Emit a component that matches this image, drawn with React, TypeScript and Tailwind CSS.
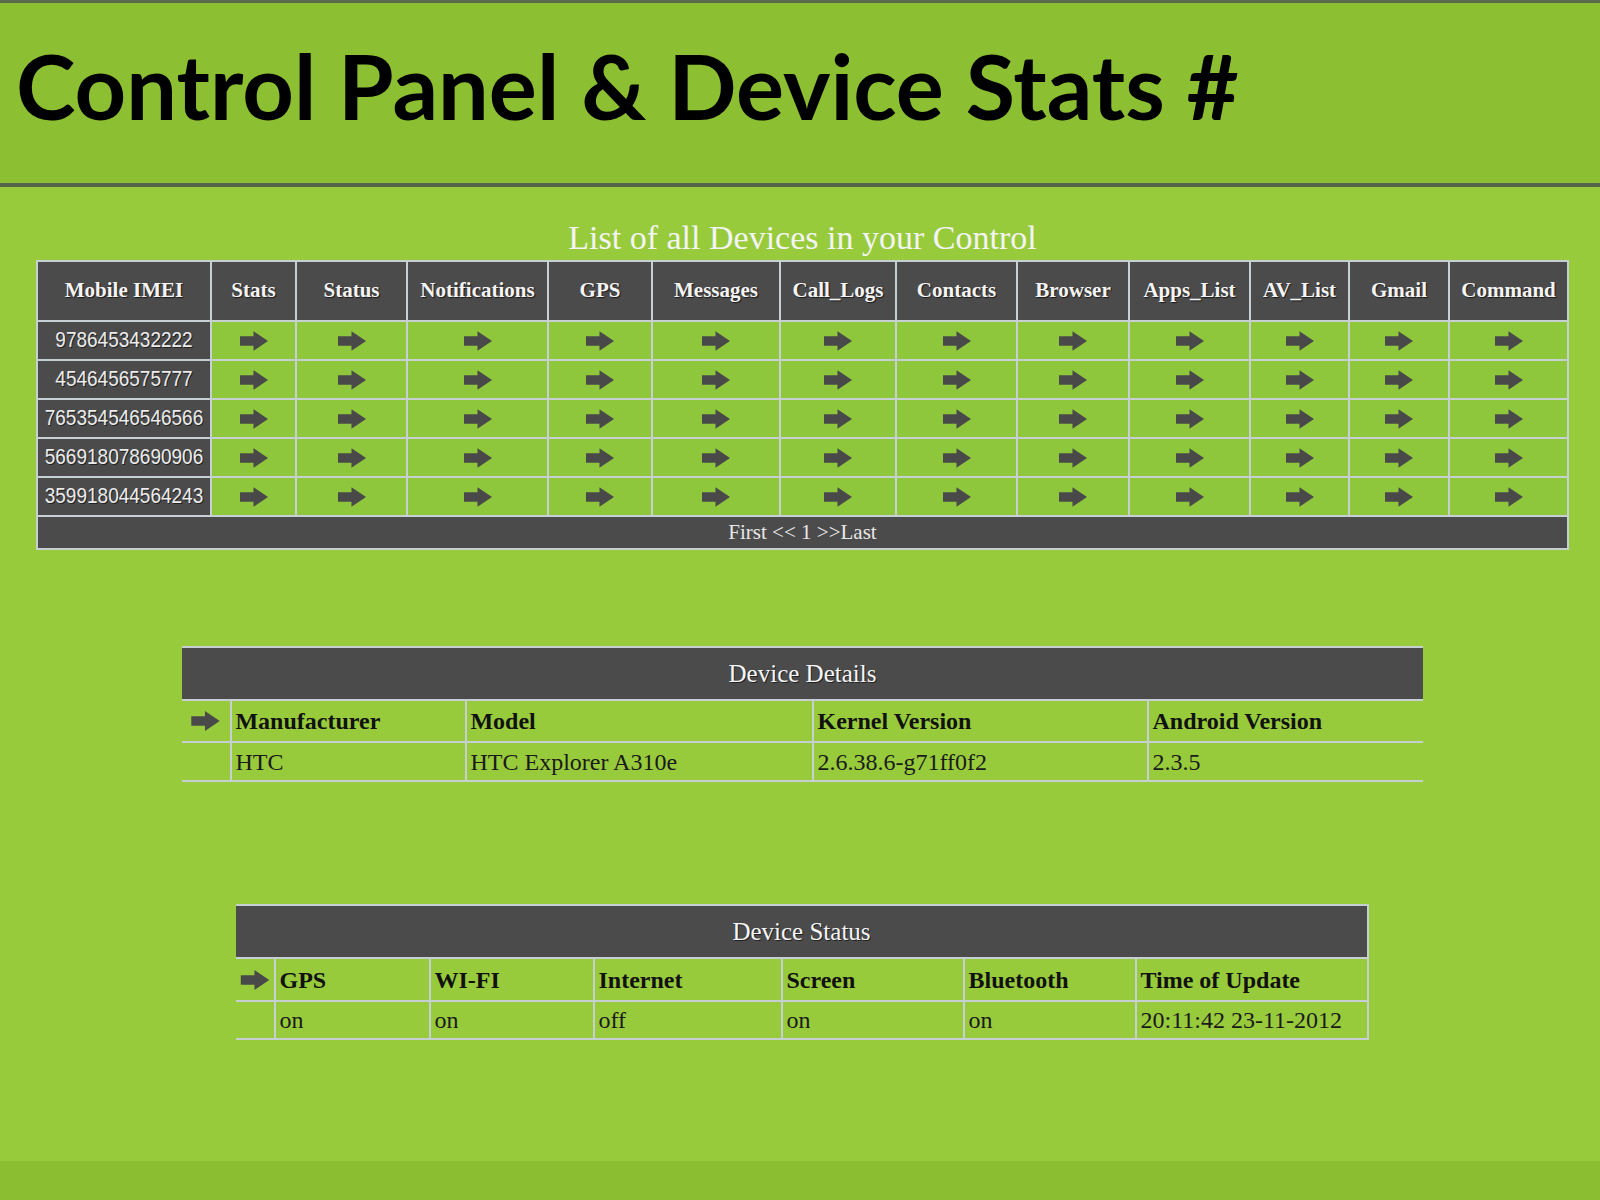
import React from "react";

const serif = "font-['Liberation_Serif','Times_New_Roman',serif]";

function Arrow({ className }: { className: string }) {
  return (
    <svg viewBox="0 0 27 19" className={className}>
      <path d="M0 5H13V0L27 9.5L13 19V14H0Z" fill="#494949" />
    </svg>
  );
}

const headers = [
  "Mobile IMEI",
  "Stats",
  "Status",
  "Notifications",
  "GPS",
  "Messages",
  "Call_Logs",
  "Contacts",
  "Browser",
  "Apps_List",
  "AV_List",
  "Gmail",
  "Command",
];

const imeis = [
  "9786453432222",
  "4546456575777",
  "765354546546566",
  "566918078690906",
  "359918044564243",
];

const bd = "border-2 border-[#c6d0d2]";

function DeviceTable() {
  return (
    <table className={`table-fixed border-collapse w-[1531px] mx-auto ${serif}`}>
      <colgroup>
        <col className="w-[174px]" />
        <col className="w-[85px]" />
        <col className="w-[111px]" />
        <col className="w-[141px]" />
        <col className="w-[104px]" />
        <col className="w-[128px]" />
        <col className="w-[116px]" />
        <col className="w-[121px]" />
        <col className="w-[112px]" />
        <col className="w-[121px]" />
        <col className="w-[99px]" />
        <col className="w-[100px]" />
        <col className="w-[119px]" />
      </colgroup>
      <thead>
        <tr className="h-[60px]">
          {headers.map((h) => (
            <th
              key={h}
              className={`${bd} bg-[#4b4b4b] text-[#f4f4f4] text-[21px] font-bold whitespace-nowrap p-0 [text-shadow:1px_1px_1px_#1a1a1a]`}
            >
              {h}
            </th>
          ))}
        </tr>
      </thead>
      <tbody>
        {imeis.map((m) => (
          <tr key={m} className="h-[39px]">
            <td
              className={`${bd} bg-[#4b4b4b] text-[#ececec] text-center p-0 font-['Liberation_Sans',Arial,sans-serif] text-[19px] whitespace-nowrap [text-shadow:1px_1px_0_#222]`}
            >
              <span className="inline-block scale-y-[1.15]">{m}</span>
            </td>
            {headers.slice(1).map((h) => (
              <td key={h} className={`${bd} bg-[#8ec63c] p-0`}>
                <Arrow className="block mx-auto w-[28px] h-[20px]" />
              </td>
            ))}
          </tr>
        ))}
        <tr className="h-[33px]">
          <td
            colSpan={13}
            className={`${bd} bg-[#4b4b4b] text-[#e8e8e8] text-center text-[21px] p-0 leading-none`}
          >
            First &lt;&lt; 1 &gt;&gt;Last
          </td>
        </tr>
      </tbody>
    </table>
  );
}

const line = "border-[#c6d0d2]";

function DetailsTable() {
  const heads = ["Manufacturer", "Model", "Kernel Version", "Android Version"];
  const vals = ["HTC", "HTC Explorer A310e", "2.6.38.6-g71ff0f2", "2.3.5"];
  return (
    <table className={`table-fixed border-collapse w-[1240px] mx-auto mt-[96px] ${serif}`}>
      <colgroup>
        <col className="w-[49px]" />
        <col className="w-[235px]" />
        <col className="w-[347px]" />
        <col className="w-[335px]" />
        <col className="w-[274px]" />
      </colgroup>
      <tbody>
        <tr className="h-[53px]">
          <th
            colSpan={5}
            className={`bg-[#4b4b4b] border-t-2 ${line} text-[#f6f6f6] text-[25px] font-normal text-center p-0 [text-shadow:1px_1px_0_#222]`}
          >
            Device Details
          </th>
        </tr>
        <tr className="h-[42px]">
          <td className={`border-t-2 ${line} p-0`}>
            <Arrow className="block ml-[8px] w-[31px] h-[20px]" />
          </td>
          {heads.map((h) => (
            <td
              key={h}
              className={`border-t-2 border-l-2 ${line} text-[#111] text-[24px] font-bold pl-[3px] py-0 whitespace-nowrap`}
            >
              {h}
            </td>
          ))}
        </tr>
        <tr className="h-[39px]">
          <td className={`border-t-2 border-b-2 ${line} p-0`} />
          {vals.map((v) => (
            <td
              key={v}
              className={`border-t-2 border-b-2 border-l-2 ${line} text-[#1a1a1a] text-[24px] pl-[3px] py-0 whitespace-nowrap`}
            >
              {v}
            </td>
          ))}
        </tr>
      </tbody>
    </table>
  );
}

function StatusTable() {
  const heads = ["GPS", "WI-FI", "Internet", "Screen", "Bluetooth", "Time of Update"];
  const vals = ["on", "on", "off", "on", "on", "20:11:42 23-11-2012"];
  return (
    <table className={`table-fixed border-collapse w-[1131px] mx-auto mt-[122px] ${serif}`}>
      <colgroup>
        <col className="w-[39px]" />
        <col className="w-[155px]" />
        <col className="w-[164px]" />
        <col className="w-[188px]" />
        <col className="w-[182px]" />
        <col className="w-[172px]" />
        <col className="w-[231px]" />
      </colgroup>
      <tbody>
        <tr className="h-[53px]">
          <th
            colSpan={7}
            className={`bg-[#4b4b4b] border-t-2 border-r-2 ${line} text-[#f6f6f6] text-[25px] font-normal text-center p-0 [text-shadow:1px_1px_0_#222]`}
          >
            Device Status
          </th>
        </tr>
        <tr className="h-[43px]">
          <td className={`border-t-2 ${line} p-0`}>
            <Arrow className="block ml-[4px] w-[30px] h-[20px]" />
          </td>
          {heads.map((h) => (
            <td
              key={h}
              className={`border-t-2 border-l-2 border-r-2 ${line} text-[#111] text-[24px] font-bold pl-[3px] py-0 whitespace-nowrap`}
            >
              {h}
            </td>
          ))}
        </tr>
        <tr className="h-[38px]">
          <td className={`border-t-2 border-b-2 ${line} p-0`} />
          {vals.map((v, i) => (
            <td
              key={i}
              className={`border-t-2 border-b-2 border-l-2 border-r-2 ${line} text-[#1a1a1a] text-[24px] pl-[3px] py-0 whitespace-nowrap`}
            >
              {v}
            </td>
          ))}
        </tr>
      </tbody>
    </table>
  );
}

export default function App() {
  return (
    <div className="w-[1600px] h-[1200px] flex flex-col bg-[#98cb3c] overflow-hidden">
      <header className="h-[187px] shrink-0 border-t-[3px] border-b-[4px] border-t-[#5d6b4c] border-b-[#56634a] bg-[#8cbf31] pl-[16px] pt-[37px]">
        <h1 className="font-['Lato','Open_Sans',sans-serif] font-bold text-[90px] leading-none text-black whitespace-nowrap">
          Control Panel &amp; Device Stats #
        </h1>
      </header>
      <main className="pl-[5px]">
        <div
          className={`mt-[34px] mb-[5px] h-[34px] leading-none text-center text-[34px] text-[#f4f4f4] ${serif}`}
        >
          List of all Devices in your Control
        </div>
        <DeviceTable />
        <DetailsTable />
        <StatusTable />
      </main>
      <div className="mt-auto h-[39px] shrink-0 bg-[#8bbe30]" />
    </div>
  );
}
